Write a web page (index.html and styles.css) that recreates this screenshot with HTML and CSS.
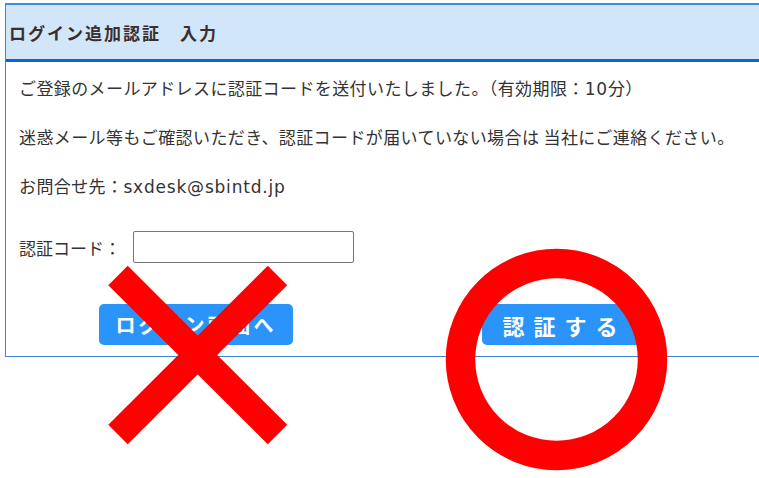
FILE: index.html
```html
<!DOCTYPE html>
<html lang="ja">
<head>
  <meta charset="UTF-8">
  <meta name="viewport" content="width=device-width, initial-scale=1.0">
  <title>ログイン追加認証 入力</title>
  <link rel="stylesheet" href="styles.css">
</head>
<body>

  <div class="page">
    <div class="panel">
      <div class="panel-head">ログイン追加認証　入力</div>
      <div class="panel-body">
        <p>ご登録のメールアドレスに認証コードを送付いたしました。（有効期限：<span class="latin">10</span>分）</p>
        <p>迷惑メール等もご確認いただき、認証コードが届いていない場合は 当社にご連絡ください。</p>
        <p>お問合せ先：<span class="latin">sxdesk@sbintd.jp</span></p>

        <div class="code-row">
          <label for="code">認証コード：</label>
          <input type="text" id="code">
        </div>

        <div class="buttons">
          <button class="btn btn-back">ログイン画面へ</button>
          <button class="btn btn-auth">認証する</button>
        </div>
      </div>
    </div>
  </div>

  <!-- annotation marks drawn over the screenshot -->
  <svg class="marks" width="759" height="478" viewBox="0 0 759 478">
    <line x1="118" y1="275.5" x2="277.5" y2="434.5" stroke="#ff0000" stroke-width="27.5"/>
    <line x1="277.5" y1="275.5" x2="118" y2="434.5" stroke="#ff0000" stroke-width="27.5"/>
    <circle cx="556.5" cy="359.5" r="96" fill="none" stroke="#ff0000" stroke-width="29.5"/>
  </svg>

</body>
</html>
```

FILE: styles.css
```css
body {
  margin: 0;
  background: #fff;
  color: #333;
  font-family: "Noto Sans CJK JP", sans-serif;
  overflow: hidden;
}
.page {
  padding: 3px 0 0 5px;
}
.panel {
  border: 1px solid #3d84d6;
  border-top: 2px solid #3d8ae0;
  border-right: none;
}
.panel-head {
  height: 54px;
  display: flex;
  align-items: center;
  padding-left: 3px;
  background-color: #d2e6fa;
  border-bottom: 3px solid #0a64d0;
  font-size: 17px;
  font-weight: bold;
  letter-spacing: 2px;
  color: #3a2e2e;
}
.panel-body {
  padding: 14px 13px 11px;
}
.panel-body p {
  margin: 0 0 25px;
  font-size: 17px;
  line-height: 24px;
  letter-spacing: 0.4px;
  white-space: nowrap;
}
.latin {
  font-family: "DejaVu Sans", sans-serif;
  font-size: 17px;
  line-height: 16px;
  letter-spacing: 0.8px;
}
.code-row {
  display: flex;
  align-items: center;
  margin-top: 33px;
  font-size: 17px;
}
.code-row label {
  width: 114px;
}
.code-row input {
  width: 221px;
  height: 32px;
  box-sizing: border-box;
  border: 1px solid #767676;
  border-radius: 2px;
}
.buttons {
  display: flex;
  margin-top: 41px;
  padding-left: 80px;
  gap: 189px;
}
.btn {
  height: 41px;
  border: none;
  border-radius: 5px;
  background-color: #2b94fa;
  color: #fff;
  font-family: "Noto Sans CJK JP", sans-serif;
  font-weight: bold;
  font-size: 20px;
  cursor: pointer;
}
.btn-back {
  width: 194px;
  letter-spacing: 3px;
}
.btn-auth {
  width: 161px;
  font-size: 22px;
  letter-spacing: 9px;
  text-indent: 4px;
}
.marks {
  position: absolute;
  top: 0;
  left: 0;
  pointer-events: none;
}
```
